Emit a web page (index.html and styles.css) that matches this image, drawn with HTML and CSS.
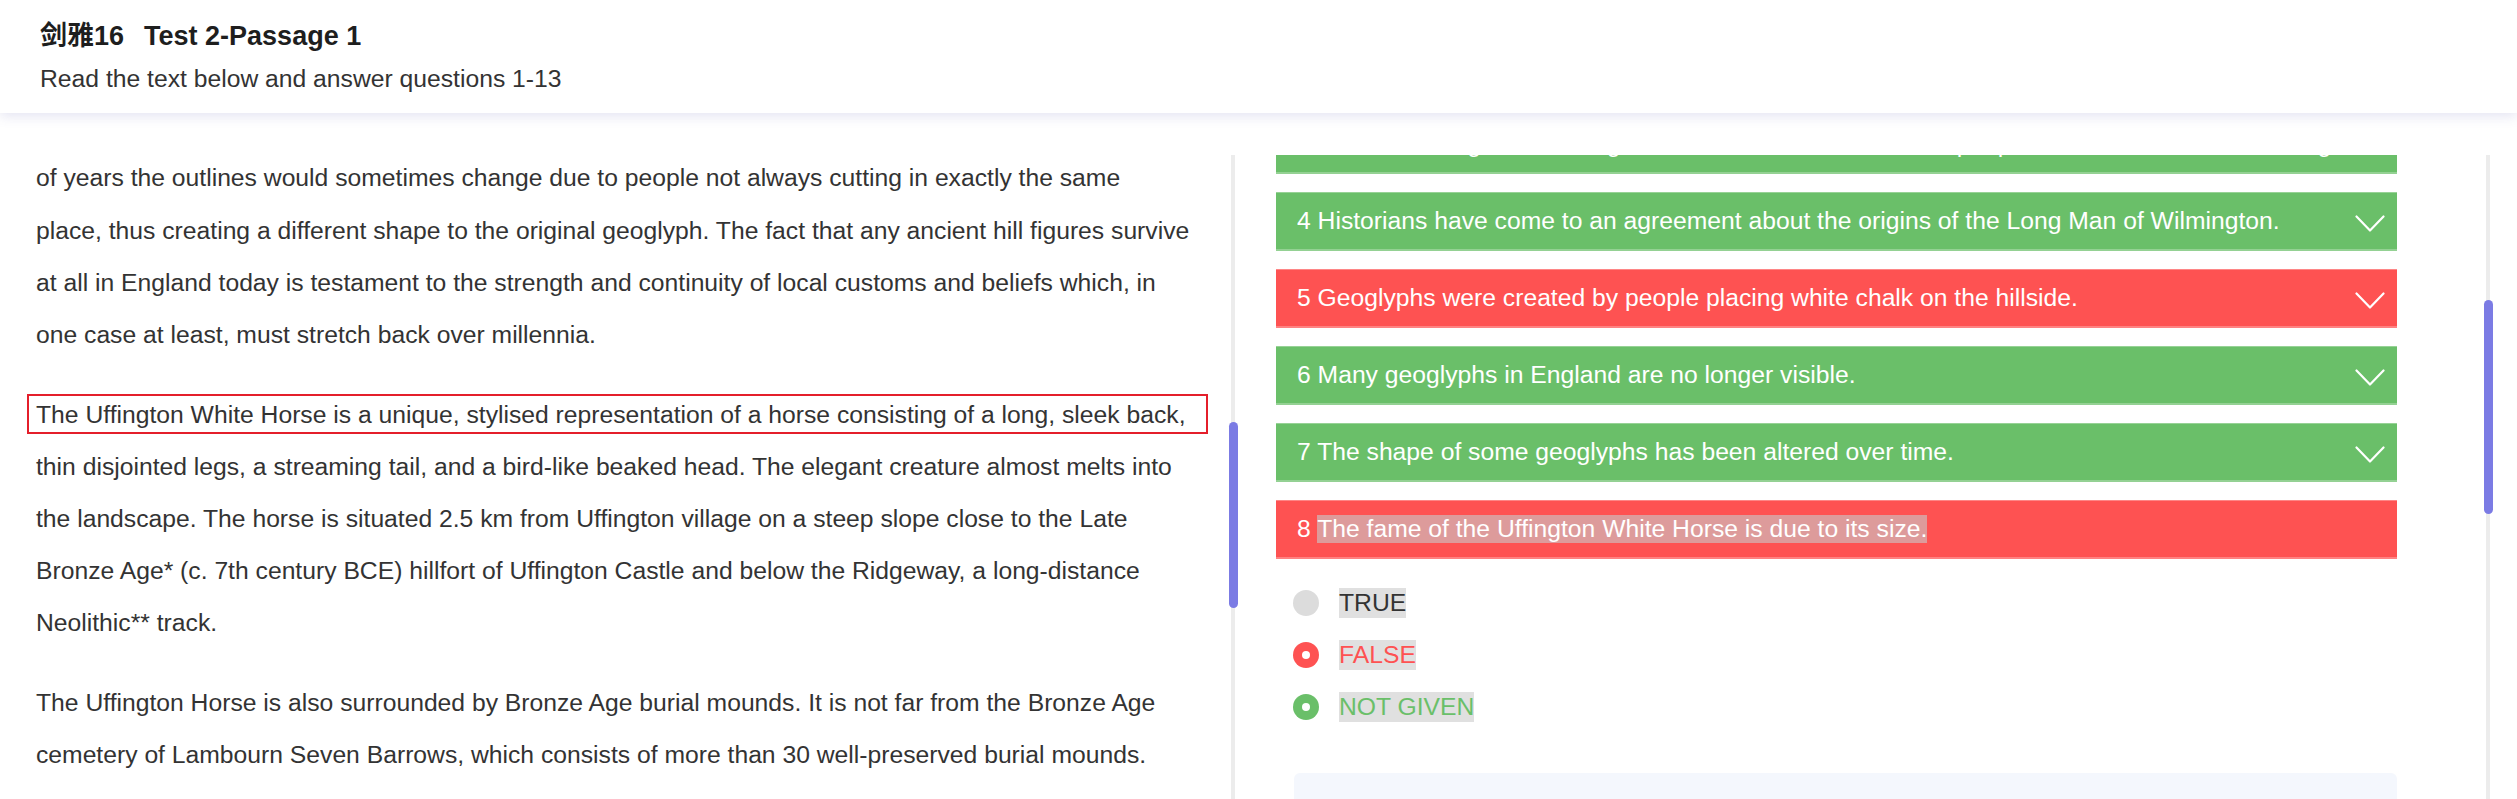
FILE: index.html
```html
<!DOCTYPE html>
<html lang="zh-CN">
<head>
<meta charset="utf-8">
<title>剑雅16 Test 2-Passage 1</title>
<link rel="stylesheet" href="styles.css">
</head>
<body>
<header class="top">
  <h1 class="title"><span class="book">剑雅16</span><span class="test">Test 2-Passage 1</span></h1>
  <p class="subtitle">Read the text below and answer questions 1-13</p>
</header>
<main class="main">
  <section class="reading">
    <div class="passage">
      <p class="para first">of years the outlines would sometimes change due to people not always cutting in exactly the same<br>place, thus creating a different shape to the original geoglyph. The fact that any ancient hill figures survive<br>at all in England today is testament to the strength and continuity of local customs and beliefs which, in<br>one case at least, must stretch back over millennia.</p>
      <p class="para located"><span class="locate-box"></span>The Uffington White Horse is a unique, stylised representation of a horse consisting of a long, sleek back,<br>thin disjointed legs, a streaming tail, and a bird-like beaked head. The elegant creature almost melts into<br>the landscape. The horse is situated 2.5 km from Uffington village on a steep slope close to the Late<br>Bronze Age* (c. 7th century BCE) hillfort of Uffington Castle and below the Ridgeway, a long-distance<br>Neolithic** track.</p>
      <p class="para">The Uffington Horse is also surrounded by Bronze Age burial mounds. It is not far from the Bronze Age<br>cemetery of Lambourn Seven Barrows, which consists of more than 30 well-preserved burial mounds.</p>
    </div>
    <div class="track"><div class="thumb thumb-left"></div></div>
  </section>
  <section class="questions">
    <div class="qscroll">
      <div class="qlist">
        <div class="qbar ok"><span class="qtext">3 A recent dating of the Uffington White Horse indicates that people were mistaken about its age.</span><svg class="chev" viewBox="0 0 30 17" width="30" height="17"><polyline points="1.5,1.5 15,15.5 28.5,1.5"/></svg></div>
        <div class="qbar ok"><span class="qtext">4 Historians have come to an agreement about the origins of the Long Man of Wilmington.</span><svg class="chev" viewBox="0 0 30 17" width="30" height="17"><polyline points="1.5,1.5 15,15.5 28.5,1.5"/></svg></div>
        <div class="qbar bad"><span class="qtext">5 Geoglyphs were created by people placing white chalk on the hillside.</span><svg class="chev" viewBox="0 0 30 17" width="30" height="17"><polyline points="1.5,1.5 15,15.5 28.5,1.5"/></svg></div>
        <div class="qbar ok"><span class="qtext">6 Many geoglyphs in England are no longer visible.</span><svg class="chev" viewBox="0 0 30 17" width="30" height="17"><polyline points="1.5,1.5 15,15.5 28.5,1.5"/></svg></div>
        <div class="qbar ok"><span class="qtext">7 The shape of some geoglyphs has been altered over time.</span><svg class="chev" viewBox="0 0 30 17" width="30" height="17"><polyline points="1.5,1.5 15,15.5 28.5,1.5"/></svg></div>
        <div class="qbar bad"><span class="qtext">8 <span class="sel">The fame of the Uffington White Horse is due to its size.</span></span></div>
        <ul class="options">
          <li class="opt"><span class="radio"></span><span class="label">TRUE</span></li>
          <li class="opt wrong"><span class="radio"></span><span class="label">FALSE</span></li>
          <li class="opt right"><span class="radio"></span><span class="label">NOT GIVEN</span></li>
        </ul>
        <div class="infobox"></div>
      </div>
    </div>
    <div class="track"><div class="thumb thumb-right"></div></div>
    <div class="gutter"></div>
  </section>
</main>
</body>
</html>
```

FILE: styles.css
```css
* { box-sizing: border-box; }
html, body {
  margin: 0;
  padding: 0;
  background: #ffffff;
  overflow: hidden;
}
body {
  font-family: "Liberation Sans", Arial, "Noto Sans CJK SC", sans-serif;
  color: #333333;
  width: 2517px;
  height: 799px;
}

/* Header */
.top {
  position: relative;
  z-index: 2;
  height: 113px;
  padding: 19px 0 0 40px;
  background: #ffffff;
  box-shadow: 0 3px 12px rgba(80, 80, 170, 0.16);
}
.title {
  margin: 0;
  font-size: 27px;
  line-height: 34px;
  font-weight: bold;
  color: #1e1e1e;
  font-family: "Liberation Sans", Arial, "Noto Sans CJK SC", sans-serif;
}
.test { margin-left: 20px; }
.subtitle {
  margin: 11px 0 0;
  font-size: 24.7px;
  line-height: 30px;
  color: #333333;
}

/* Main */
.main {
  display: flex;
  height: 686px;
  padding-top: 42px;
  background: #ffffff;
}

/* Left reading pane */
.reading {
  display: flex;
  width: 1235px;
  height: 644px;
}
.passage {
  flex: 1;
  overflow: hidden;
  padding: 0 32px 0 36px;
}
.para {
  position: relative;
  margin: 0 0 27.5px;
  font-size: 24.7px;
  line-height: 52.2px;
  white-space: nowrap;
  color: #333333;
}
.para.first { margin-top: -2.65px; }
.locate-box {
  position: absolute;
  left: -9px;
  right: -9px;
  top: 5.3px;
  height: 40px;
  border: 2px solid #e41f2b;
}

/* Scrollbars */
.track {
  position: relative;
  width: 4px;
  height: 100%;
  background: #ececec;
}
.thumb {
  position: absolute;
  left: -2.5px;
  width: 9px;
  border-radius: 5px;
  background: #7b7be4;
}
.thumb-left { top: 267px; height: 186px; }
.thumb-right { top: 145px; height: 214px; }

/* Right questions pane */
.questions {
  display: flex;
  flex: 1;
  height: 644px;
}
.qscroll {
  flex: 1;
  overflow: hidden;
  padding: 0 89px 0 41px;
}
.gutter { width: 27px; }
.qlist { margin-top: -40px; }
.qbar {
  display: flex;
  align-items: center;
  justify-content: space-between;
  height: 59px;
  margin-bottom: 18px;
  padding: 0 12px 0 21px;
  border-top: 1px solid rgba(255, 255, 255, 0.3);
  border-bottom: 2px solid rgba(255, 255, 255, 0.28);
  color: #ffffff;
  font-size: 24.7px;
}
.qbar.ok { background: #6abf69; }
.qbar.bad { background: #fe5252; }
.qtext {
  white-space: nowrap;
  overflow: hidden;
}
.sel {
  padding: 1px 0;
  background: rgba(200, 200, 200, 0.62);
}
.chev {
  flex: none;
  margin-top: 4px;
  fill: none;
  stroke: #ffffff;
  stroke-width: 2.2;
  stroke-linecap: round;
  stroke-linejoin: round;
}

/* Options */
.options {
  list-style: none;
  margin: 0;
  padding: 0;
}
.opt {
  display: flex;
  align-items: center;
  height: 52px;
  padding-left: 17px;
  font-size: 24.7px;
  color: #333333;
}
.radio {
  position: relative;
  flex: none;
  width: 26px;
  height: 26px;
  border-radius: 50%;
  background: #dcdcdc;
  margin-right: 20px;
}
.opt.wrong .radio { background: #fe5252; }
.opt.right .radio { background: #6abf69; }
.opt.wrong .radio::after,
.opt.right .radio::after {
  content: "";
  position: absolute;
  left: 9px;
  top: 9px;
  width: 8px;
  height: 8px;
  border-radius: 50%;
  background: #ffffff;
}
.label {
  line-height: 30px;
  background: #e0e0e0;
}
.opt.wrong .label { color: #fe5252; }
.opt.right .label { color: #6abf69; }

.infobox {
  margin: 40px 0 0 18px;
  height: 120px;
  border-radius: 6px;
  background: #f4f7fd;
}
```
